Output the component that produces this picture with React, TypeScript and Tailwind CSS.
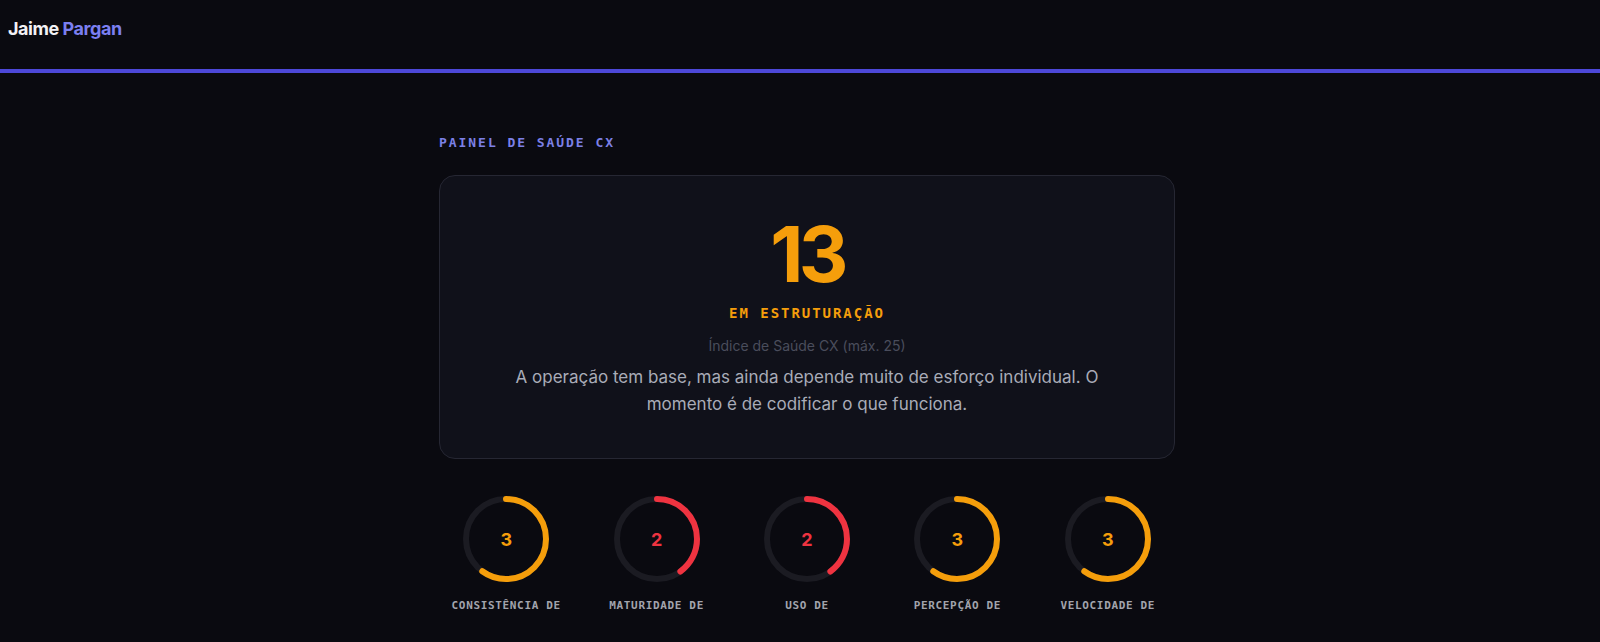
import React from "react";

type Metric = { label: string; value: number; color: string };

const metrics: Metric[] = [
  { label: "CONSISTÊNCIA DE", value: 3, color: "#f59e0b" },
  { label: "MATURIDADE DE", value: 2, color: "#ef3340" },
  { label: "USO DE", value: 2, color: "#ef3340" },
  { label: "PERCEPÇÃO DE", value: 3, color: "#f59e0b" },
  { label: "VELOCIDADE DE", value: 3, color: "#f59e0b" },
];

function Ring({ value, color }: { value: number; color: string }) {
  const r = 40;
  const c = 2 * Math.PI * r;
  const pct = value / 5;
  return (
    <div className="relative h-[86px] w-[86px]">
      <svg width="86" height="86" viewBox="0 0 86 86" className="-rotate-90">
        <circle cx="43" cy="43" r={r} fill="none" stroke="#1b1b22" strokeWidth="6" />
        <circle
          cx="43"
          cy="43"
          r={r}
          fill="none"
          stroke={color}
          strokeWidth="6"
          strokeLinecap="round"
          strokeDasharray={`${c * pct} ${c}`}
        />
      </svg>
      <div
        className="absolute inset-0 flex items-center justify-center text-[18px] font-bold"
        style={{ color }}
      >
        {value}
      </div>
    </div>
  );
}

export default function App() {
  return (
    <div className="min-h-screen bg-[#0a0a10] font-['Inter',sans-serif]">
      <header className="flex h-[73px] items-start px-2 pt-[15px] border-b-[4px] border-[#4d48d8]">
        <span className="text-[18px] leading-[28px] font-bold tracking-tight text-[#f2f2f5]">
          Jaime <span className="text-[#7b7ff0]">Pargan</span>
        </span>
      </header>

      <main className="pl-[14px]">
        <div className="mx-auto w-[736px] pt-[61px]">
          <p className="font-['DejaVu_Sans_Mono',monospace] text-[13px] leading-[18px] font-bold tracking-[0.15em] text-[#7c80e6]">
            PAINEL DE SAÚDE CX
          </p>

          <section className="mt-[23px] flex flex-col items-center rounded-2xl border border-[#262733] bg-[#10111a] px-10 pt-[40px] pb-[41px] text-center">
            <div className="text-[77px] font-bold leading-none tracking-[-0.06em] text-[#f59e0b]">
              13
            </div>
            <p className="mt-[10px] font-['DejaVu_Sans_Mono',monospace] text-[14px] leading-[20px] font-bold tracking-[0.14em] text-[#f59e0b]">
              EM ESTRUTURAÇÃO
            </p>
            <p className="mt-[13px] text-[14px] leading-[20px] text-[#4a4d5c]">
              Índice de Saúde CX (máx. 25)
            </p>
            <p className="mt-[8px] max-w-[640px] text-[17px] leading-[26.5px] text-[#a9acb8]">
              A operação tem base, mas ainda depende muito de esforço individual. O momento é de
              codificar o que funciona.
            </p>
          </section>

          <div className="mt-[37px] grid grid-cols-5 gap-4">
            {metrics.map((m) => (
              <div key={m.label} className="flex flex-col items-center">
                <Ring value={m.value} color={m.color} />
                <p className="mt-[16px] font-['DejaVu_Sans_Mono',monospace] text-[11px] leading-[16px] font-bold tracking-[0.06em] text-[#a2a4ad]">
                  {m.label}
                </p>
              </div>
            ))}
          </div>
        </div>
      </main>
    </div>
  );
}
